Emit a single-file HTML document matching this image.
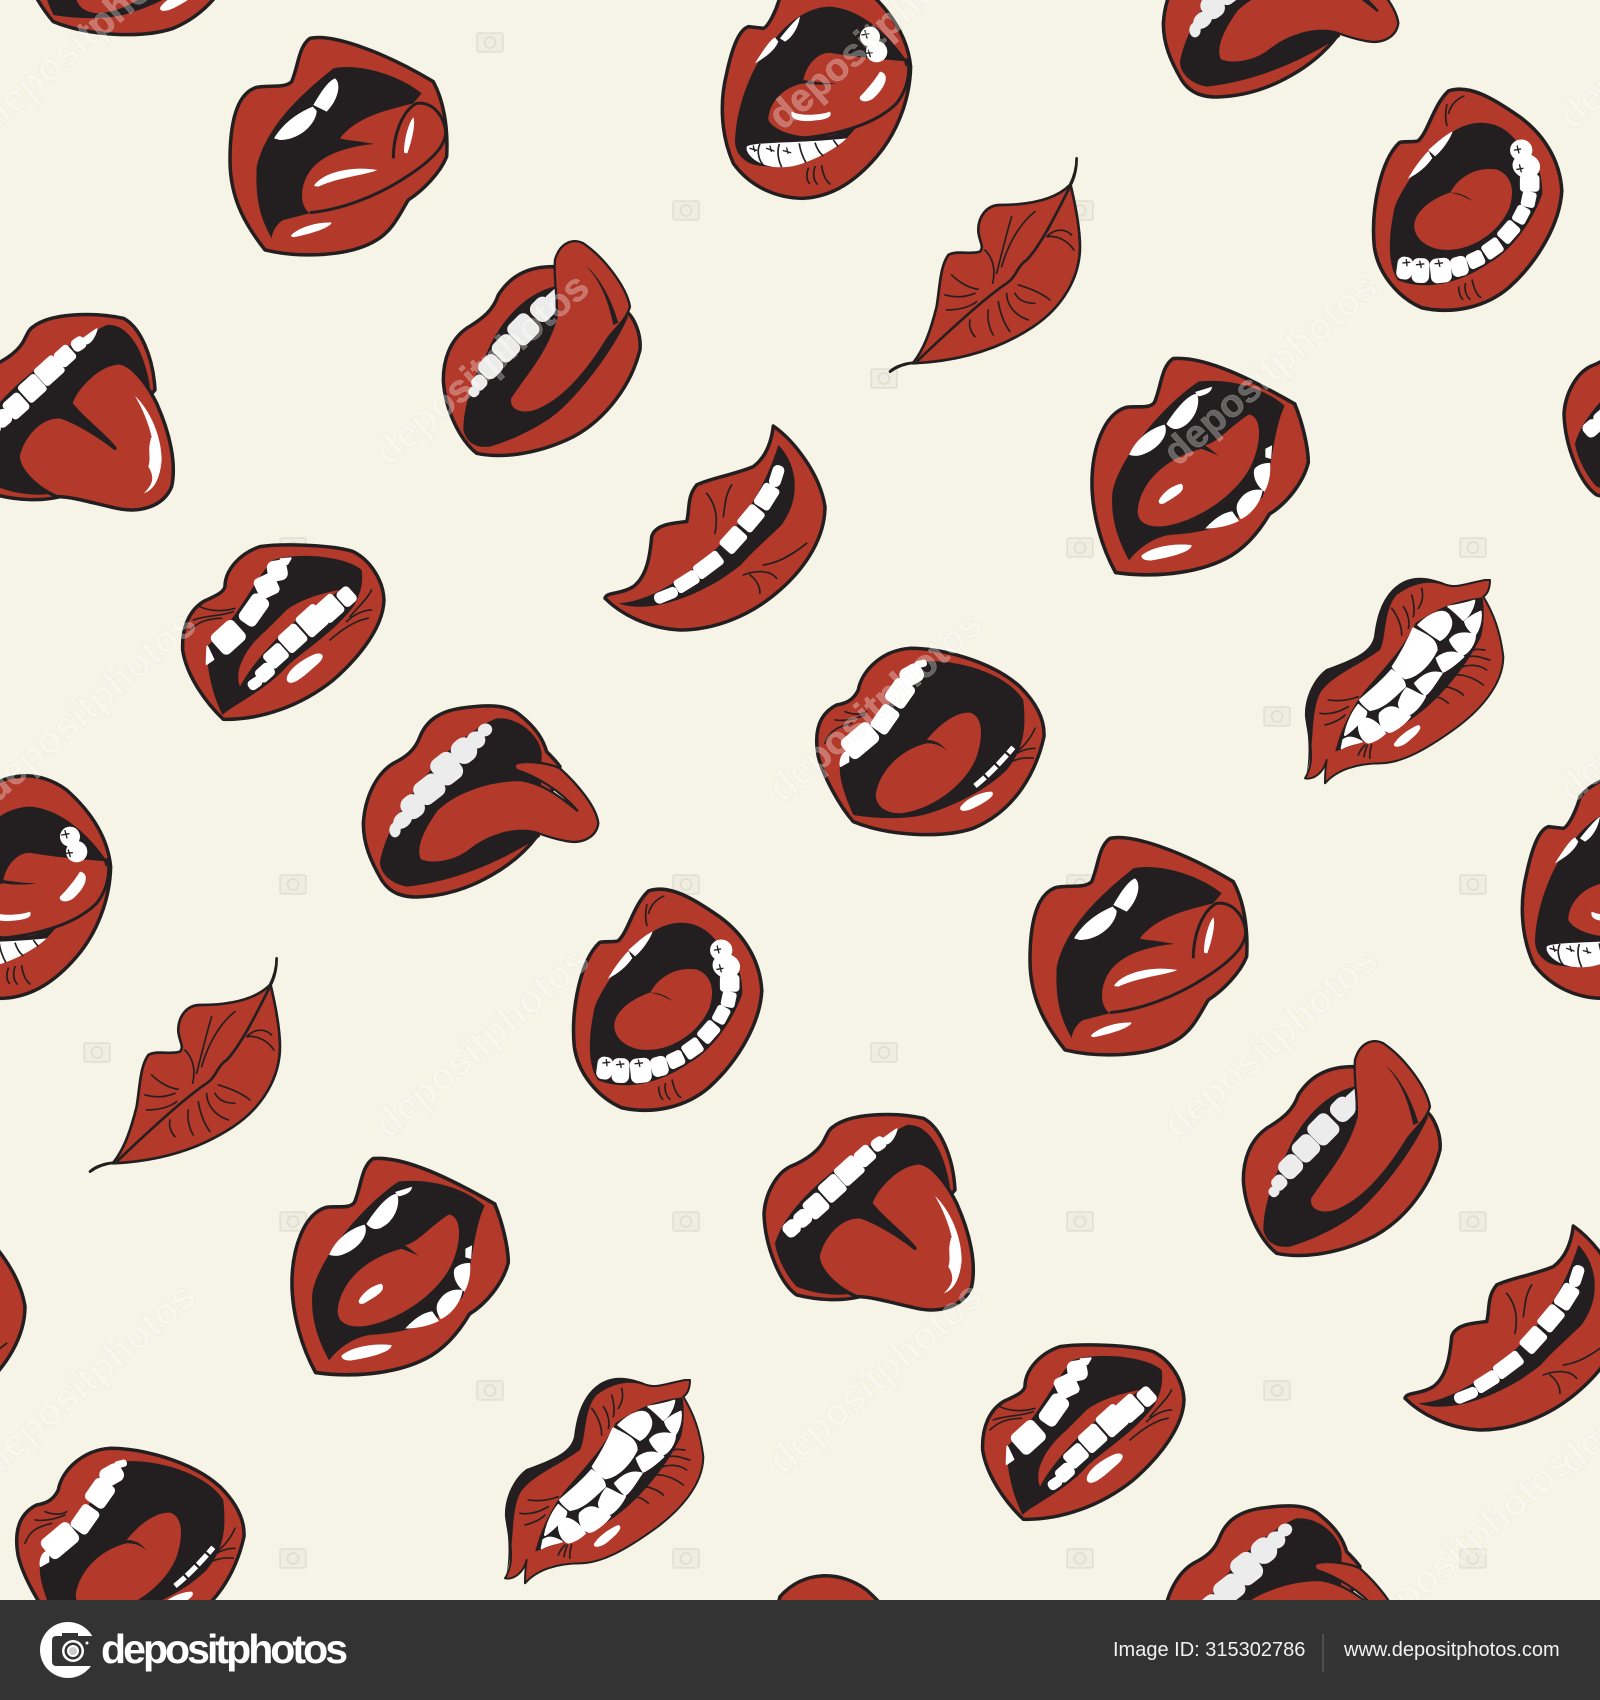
<!DOCTYPE html>
<html lang="en"><head><meta charset="utf-8"><title>Lips pattern</title>
<style>
html,body{margin:0;padding:0;background:#f6f4e6;width:1600px;height:1700px;overflow:hidden}
svg{display:block;overflow:hidden}
.o{fill:#b3392b;stroke:#231f20;stroke-width:10.500;stroke-linejoin:round}
.k{fill:#231f20}
.r{fill:#b3392b}
.s{fill:#b3392b;stroke:#231f20;stroke-width:7;stroke-linejoin:round}
.w{fill:#fff}
.e{fill:#fff;stroke:#fff;stroke-width:6;stroke-linejoin:round}
.g{fill:#ececec;stroke:#ececec;stroke-width:4}
.l{fill:none;stroke:#231f20;stroke-width:5;stroke-linecap:round}
.t{fill:none;stroke:#fff;stroke-linecap:butt}
.wm{font-family:"Liberation Sans",sans-serif;font-size:39px;font-weight:bold;fill:#fff;fill-opacity:.3;stroke:#d8d6c8;stroke-opacity:.3;stroke-width:.7}
</style></head><body>
<svg xmlns="http://www.w3.org/2000/svg" width="1600" height="1700" viewBox="0 0 1600 1700">
<defs>
<g id="c"><rect x="-13" y="-9" width="26" height="19" rx="2" fill="#8b897f" fill-opacity=".07"/><circle cx="0" cy="0.500" r="5.500"/></g>
<pattern id="cam" x="0" y="0" width="787" height="674" patternUnits="userSpaceOnUse">
<g fill="none" stroke="#8b897f" stroke-opacity=".17" stroke-width="1.5">
<use href="#c" x="490" y="42"/><use href="#c" x="293" y="210"/><use href="#c" x="686" y="210"/><use href="#c" x="97" y="378"/><use href="#c" x="293" y="547"/><use href="#c" x="686" y="547"/>
</g>
</pattern>
<g id="tile">
<!-- mouth 1 -->
<g transform="translate(200 0) scale(.3333)">
<path class="o" d="M330,115C400,100 560,160 700,245C730,300 745,380 740,470C720,520 670,570 625,600C600,640 580,690 530,720C450,770 300,775 195,750C140,680 90,600 90,480C90,370 110,280 170,262C215,255 255,265 275,245C295,200 295,140 330,115Z"/>
<path class="k" d="M400,205C470,190 590,220 665,280L640,310C560,330 470,350 420,415L525,432C430,440 340,480 310,560L330,640L250,660C230,670 215,700 215,715C185,660 165,610 170,500C200,370 320,270 400,205Z"/>
<path class="r" d="M420,415C470,350 570,330 650,310C700,305 735,350 735,400C735,470 640,560 480,610C420,630 360,640 330,640C300,620 300,570 320,530C350,470 430,440 525,432C490,420 450,425 420,415Z"/>
<path fill="none" stroke="#231f20" stroke-width="9" d="M330,638C420,630 530,590 620,530C690,485 735,440 737,400C735,350 700,305 650,310C610,330 580,400 580,475"/>
<path class="w" d="M222,415C250,370 290,340 338,320L350,332C350,370 300,420 240,420ZM340,315C355,290 380,245 405,235C425,250 415,300 380,335Z"/>
<path class="w" d="M342,558C360,525 440,495 532,510C500,525 420,530 355,560ZM612,458C612,420 625,370 640,352C648,370 635,425 622,460ZM272,708C290,685 350,665 395,668C390,685 320,705 280,712Z"/>
</g>
<!-- mouth 2 -->
<g transform="translate(200 0) scale(.3333)">
<path class="o" d="M1060,800C980,800 930,830 895,885C880,930 850,955 800,985C750,1020 730,1080 730,1140C735,1230 780,1320 830,1360C900,1375 1000,1365 1100,1320C1200,1275 1290,1170 1320,1050C1325,1000 1300,950 1280,935Z"/>
<path class="k" d="M1062,860C980,880 900,960 860,1060C820,1130 790,1220 790,1290C800,1330 830,1345 870,1340C940,1320 1020,1280 1070,1240C1150,1170 1240,1050 1285,950L1100,850Z"/>
<g class="g">
<rect x="-32" y="-32" width="64" height="64" rx="22" transform="translate(1028 928) rotate(-45)"/>
<rect x="-38" y="-38" width="76" height="76" rx="18" transform="translate(970 988) rotate(-45)"/>
<rect x="-34" y="-34" width="68" height="68" rx="18" transform="translate(918 1045) rotate(-45)"/>
<rect x="-32" y="-30" width="64" height="60" rx="20" transform="translate(872 1100) rotate(-45)"/>
<rect x="-20" y="-20" width="40" height="40" rx="14" transform="translate(838 1148) rotate(-45)"/>
<rect x="-14" y="-14" width="28" height="28" rx="12" transform="translate(822 1175) rotate(-45)"/>
<path d="M1040,890L1065,868L1065,930L1045,930Z"/>
</g>
<path class="s" d="M1065,780C1080,725 1120,715 1150,730C1210,770 1280,860 1290,920C1280,960 1240,990 1220,1020C1160,1120 1080,1210 1000,1235C960,1245 925,1230 930,1195C970,1130 1040,1060 1070,950C1075,900 1060,840 1065,780Z"/>
<path class="k" d="M1155,795C1200,840 1225,900 1240,975L1255,968C1235,900 1200,830 1155,795Z"/>
</g>
<!-- mouth 3 -->
<g transform="translate(700 0) scale(.3333)">
<path class="o" d="M240,-10C230,30 205,80 190,85L145,80C115,90 95,150 80,220C60,300 60,400 100,490C150,560 230,595 310,595C400,590 470,540 530,470C590,400 630,300 632,200C625,130 590,50 500,-30C420,-90 310,-90 240,-10Z"/>
<path class="k" d="M230,110C280,50 340,20 390,20C470,25 560,90 625,190L560,280L440,415C350,490 220,515 150,490C110,470 105,440 105,420C110,300 170,170 230,110Z"/>
<path class="r" d="M310,240C320,190 360,150 400,160C460,170 540,180 610,175L620,210C600,290 520,370 400,405C330,420 230,405 205,360C205,310 250,260 310,250C340,255 380,255 410,250C380,250 340,245 310,240Z"/>
<path fill="none" stroke="#231f20" stroke-width="9" d="M200,415C300,425 500,400 590,310C620,270 630,230 625,180L530,172"/>
<path class="w" d="M140,440C155,425 300,430 440,415C410,445 330,490 270,500C200,510 150,480 140,450Z"/>
<path fill="none" stroke="#231f20" stroke-width="5" d="M180,432C170,450 175,480 190,495M238,432C230,455 235,480 245,502M298,430C300,450 310,475 318,488M345,428C350,445 360,460 370,468M400,420L415,440"/>
<path class="l" style="stroke-width:4" d="M150,445l20,6M160,438l4,16M200,445l22,8M210,438l4,16M250,452l22,6M260,444l4,16"/>
<path class="w" d="M165,190C190,150 210,120 225,112L235,125C225,150 200,170 165,190ZM240,115C260,90 285,60 300,50C295,80 280,110 255,125Z"/>
<circle class="w" cx="510" cy="110" r="30"/><circle class="w" cx="530" cy="155" r="32"/>
<path class="l" style="stroke-width:4" d="M485,105l22,-4M495,92l6,22M495,160l22,-2M505,150l6,20"/>
<path class="w" d="M275,335C305,350 365,345 390,335C400,355 370,360 330,363C290,365 270,355 275,335ZM480,290C500,270 525,240 540,215C570,220 560,260 520,295C500,310 475,305 480,290Z"/>
<path class="l" d="M325,505C318,525 320,540 328,550M345,500C338,520 340,540 352,552M365,497C368,520 375,540 390,552"/>
</g>
<!-- mouth 4 kiss -->
<g transform="translate(700 0) scale(.3333)">
<path class="o" style="stroke-width:8" d="M1130,475C1130,510 1120,535 1110,555C1080,585 1020,615 900,615C860,615 835,650 835,690C835,720 855,740 840,755C810,765 770,750 745,765C720,800 720,860 710,920C690,1000 670,1050 640,1088C610,1092 590,1100 570,1115C590,1095 630,1088 640,1090C750,1085 880,1060 1000,980C1090,920 1140,830 1140,740C1140,680 1125,610 1112,555C1125,530 1130,500 1130,475Z"/>
<path fill="none" stroke="#231f20" stroke-width="8" d="M1110,560C1070,640 1020,740 980,780C950,800 950,830 920,850C860,890 760,980 650,1085"/>
<path class="l" d="M935,650C920,700 900,780 890,820M1005,635C960,670 925,730 905,800M855,750C885,780 885,820 878,850M755,825C780,850 810,865 835,868M735,885C770,895 800,890 825,880M740,930C780,930 810,920 830,905M1040,710C1070,680 1100,690 1115,705M1040,710C1075,705 1105,725 1122,750M955,855C990,865 1025,880 1050,900M945,880C955,900 975,910 1005,910M920,880C920,910 940,945 985,960M895,905C900,940 915,975 930,995M865,930C860,960 870,990 880,1005M810,960C805,980 815,1000 825,1010"/>
</g>
<!-- mouth 5 -->
<g transform="translate(1070 60) scale(.338 .344)">
<path class="o" d="M1120,90C1180,70 1250,110 1330,165C1400,215 1450,290 1455,380C1450,470 1390,580 1300,660C1230,720 1130,740 1040,720C970,690 910,620 900,540C890,430 920,290 975,240C990,235 1015,240 1030,235C1060,210 1075,130 1120,90Z"/>
<path class="k" d="M1130,210C1190,170 1270,170 1320,235C1370,270 1400,320 1397,390C1370,470 1300,560 1240,590C1130,665 1030,665 970,640C935,590 945,500 960,430C975,380 1060,260 1130,210Z"/>
<path class="r" d="M1125,385C1150,340 1200,310 1260,318C1300,330 1320,370 1300,430C1270,500 1190,555 1110,552C1050,550 1010,510 1020,470C1030,430 1080,400 1125,385C1150,390 1175,400 1195,412C1175,395 1150,385 1125,385Z"/>
<g class="e">
<rect x="-20" y="-30" width="40" height="60" rx="16" transform="translate(990 605) rotate(8)"/>
<rect x="-23" y="-33" width="46" height="66" rx="16" transform="translate(1037 612) rotate(2)"/>
<rect x="-28" y="-33" width="56" height="66" rx="16" transform="translate(1097 612) rotate(-6)"/>
<rect x="-22" y="-26" width="44" height="52" rx="14" transform="translate(1152 600) rotate(-15)"/>
<rect x="-22" y="-20" width="44" height="40" rx="8" transform="translate(1200 580) rotate(-25)"/>
<rect x="-25" y="-21" width="50" height="42" rx="6" transform="translate(1250 548) rotate(-35)"/>
<rect x="-27" y="-21" width="54" height="42" rx="6" transform="translate(1298 500) rotate(-48)"/>
<rect x="-22" y="-18" width="44" height="36" rx="6" transform="translate(1335 450) rotate(-62)"/>
<rect x="-20" y="-18" width="40" height="36" rx="6" transform="translate(1357 405) rotate(-78)"/>
<rect x="-22" y="-26" width="44" height="52" rx="8" transform="translate(1360 358) rotate(-90)"/>
<ellipse cx="1350" cy="308" rx="38" ry="32" transform="rotate(15 1350 308)"/>
<ellipse cx="1335" cy="262" rx="30" ry="28"/>
</g>
<path class="w" d="M1000,345C1020,310 1045,280 1060,265L1072,285C1055,310 1030,330 1000,345ZM1060,262C1085,240 1115,215 1132,208C1125,230 1100,265 1080,280Z"/>
<path class="l" style="stroke-width:4" d="M1315,262l18,-3M1323,250l5,20M1322,318l18,-3M1330,305l5,20M985,590l20,-2M995,580l2,18M1025,595l22,-2M1035,585l4,18M1080,592l22,-2M1090,582l4,18"/>
<path class="l" d="M1150,660C1150,675 1155,690 1162,695M1170,650C1165,670 1175,690 1183,695M1190,640C1195,665 1205,685 1215,690M1115,130C1110,150 1110,170 1115,190M1165,105C1140,115 1125,135 1120,155"/>
</g>
<!-- mouth 6 -->
<g transform="translate(1070 60) scale(.338 .344)">
<path class="o" d="M305,868C400,860 540,930 665,1000C690,1060 705,1130 705,1170C690,1230 640,1290 590,1320C560,1370 520,1420 460,1450C370,1495 240,1505 135,1490C95,1420 65,1320 65,1230C65,1130 100,1030 165,1010C200,1005 235,1015 250,995C270,950 270,890 305,868Z"/>
<path class="k" d="M380,935C470,925 570,950 635,1005C600,1080 600,1180 570,1270C500,1350 400,1375 300,1380C250,1385 200,1420 175,1455C145,1400 120,1340 125,1260C140,1160 280,1000 380,935Z"/>
<path class="r" d="M200,1310C205,1240 270,1160 390,1130L440,1150L400,1120C440,1110 480,1060 530,1030C570,1040 565,1110 540,1170C500,1260 380,1340 280,1355C230,1360 200,1345 200,1310Z"/>
<path class="w" d="M175,1148C195,1100 240,1070 280,1060C295,1090 260,1130 220,1145C205,1152 190,1152 175,1148ZM285,1058C310,1020 345,975 375,970C390,1000 365,1060 320,1072C305,1075 295,1068 285,1058ZM370,965L420,950C420,965 400,975 380,978Z"/>
<path class="w" d="M545,1190C555,1175 580,1170 592,1172C595,1210 585,1240 575,1255C555,1240 540,1215 545,1190ZM495,1290C510,1260 535,1245 570,1250C565,1290 530,1325 505,1335C495,1320 490,1305 495,1290ZM400,1362C420,1340 450,1315 480,1312L500,1340C470,1355 430,1362 400,1362ZM578,1130L598,1120L595,1160L578,1155Z"/>
<path class="w" d="M263,1280C280,1250 310,1235 330,1232C345,1250 320,1265 280,1288C270,1293 260,1290 263,1280ZM212,1440C250,1410 320,1405 360,1410C360,1430 300,1445 240,1455C220,1455 210,1450 212,1440Z"/>
</g>
<!-- mouth 7 -->
<g transform="translate(0 300) scale(.3333)">
<path class="o" d="M100,80C150,40 280,35 370,55C420,80 460,170 465,270L180,590C120,605 50,600 -10,585C-60,550 -105,440 -108,342C-105,280 -70,220 -30,200C20,180 60,150 75,115C85,95 90,85 100,80Z"/>
<path class="k" d="M320,75C380,70 430,140 450,260L160,580C100,590 40,580 -10,560C-40,530 -70,470 -75,430C-40,310 130,170 320,75Z"/>
<g class="e">
<rect x="-35" y="-30" width="70" height="60" rx="7" transform="translate(148 212) rotate(-42)"/>
<rect x="-31" y="-30" width="62" height="60" rx="7" transform="translate(97 265) rotate(-42)"/>
<rect x="-29" y="-29" width="58" height="58" rx="9" transform="translate(48 318) rotate(-42)"/>
<rect x="-22" y="-22" width="44" height="44" rx="14" transform="translate(8 355) rotate(-42)"/>
<rect x="-22" y="-21" width="44" height="42" rx="14" transform="translate(-25 385) rotate(-42)"/>
<rect x="-24" y="-24" width="48" height="48" rx="8" transform="translate(195 168) rotate(-42)"/>
<rect x="-19" y="-17" width="38" height="34" rx="12" transform="translate(236 132) rotate(-35)"/>
<path d="M252,115C265,105 280,95 290,88C285,105 275,125 262,130Z"/>
</g>
<path class="o" d="M345,190C380,180 430,230 470,310C510,400 530,490 515,560C490,620 420,640 350,625C280,610 220,590 170,590C100,560 50,500 55,465C65,420 110,350 180,350C230,365 300,410 345,445C310,400 250,360 212,310C230,260 290,200 345,190Z"/>
<path class="w" d="M405,288C450,330 485,410 485,480C480,540 460,570 432,580C450,560 470,540 445,500C455,470 440,450 455,410C445,370 430,330 405,288Z"/>
</g>
<!-- mouth 8 smile -->
<g transform="translate(590 410) scale(.3333)">
<path class="o" d="M550,48C610,90 690,190 705,290C705,380 650,470 570,540C480,620 370,660 270,660C170,655 90,610 45,565C50,545 90,555 130,530C170,500 180,440 185,380C195,345 240,340 290,335C300,300 290,260 320,225C360,205 430,195 490,170C530,140 545,90 550,48Z"/>
<path class="k" d="M565,105C620,160 630,250 590,320C560,380 480,450 390,510C290,570 170,610 85,580C170,575 260,520 340,450C430,380 520,250 565,105Z"/>
<path class="r" d="M585,335C560,380 490,440 445,475C480,430 530,390 585,335Z"/>
<g class="e">
<rect x="-30" y="-15" width="60" height="30" rx="13" transform="translate(560 198) rotate(-72)"/>
<rect x="-34" y="-24" width="68" height="48" rx="8" transform="translate(530 260) rotate(-58)"/>
<rect x="-34" y="-25" width="68" height="50" rx="7" transform="translate(483 325) rotate(-50)"/>
<rect x="-34" y="-25" width="68" height="50" rx="7" transform="translate(430 390) rotate(-48)"/>
<rect x="-42" y="-21" width="84" height="42" rx="7" transform="translate(355 465) rotate(-37)"/>
<rect x="-34" y="-19" width="68" height="38" rx="7" transform="translate(290 515) rotate(-32)"/>
<rect x="-34" y="-14" width="68" height="28" rx="12" transform="translate(228 556) rotate(-22)"/>
</g>
<path class="l" d="M350,250C375,280 385,320 375,370M425,225C405,255 405,290 400,320M650,400C600,440 560,460 520,465M460,495C500,480 540,480 560,505M480,495C500,510 510,530 510,550"/>
</g>
<!-- mouth 9 grimace -->
<g transform="translate(0 300) scale(.3333)">
<path class="o" d="M780,740C850,730 1000,735 1060,755C1110,780 1150,840 1152,900C1150,980 1080,1070 1000,1140C900,1220 780,1260 670,1258C620,1210 560,1130 548,1050C545,980 570,930 610,905C640,890 670,880 675,860C675,810 720,760 780,740Z"/>
<path class="k" d="M820,780C760,840 720,950 620,1040C620,1090 630,1170 668,1245C690,1220 800,1170 860,1100C900,1060 1000,1000 1060,920C1085,880 1090,840 1085,810C1040,770 900,755 820,780Z"/>
<path class="r" d="M720,1160C700,1110 740,1040 800,990L860,930C900,900 960,880 1020,870L890,960C830,1010 750,1100 720,1160Z"/>
<g class="e">
<rect x="-42" y="-36" width="84" height="72" rx="14" transform="translate(685 1012) rotate(-42)"/>
<rect x="-45" y="-27" width="90" height="54" rx="14" transform="translate(762 930) rotate(-55)"/>
<rect x="-30" y="-30" width="60" height="60" rx="12" transform="translate(800 858) rotate(-25)"/>
<rect x="-27" y="-28" width="54" height="56" rx="18" transform="translate(832 812) rotate(-10)"/>
<path d="M622,1040L640,1078L620,1092ZM842,778L872,775L862,792Z"/>
<rect x="-20" y="-25" width="40" height="50" rx="10" transform="translate(1040 890) rotate(-42)"/>
<rect x="-30" y="-32" width="60" height="64" rx="8" transform="translate(990 925) rotate(-42)"/>
<rect x="-35" y="-36" width="70" height="72" rx="8" transform="translate(937 962) rotate(-42)"/>
<rect x="-32" y="-31" width="64" height="62" rx="8" transform="translate(878 1015) rotate(-42)"/>
<rect x="-30" y="-25" width="60" height="50" rx="8" transform="translate(828 1068) rotate(-42)"/>
<rect x="-24" y="-20" width="48" height="40" rx="10" transform="translate(795 1118) rotate(-42)"/>
<rect x="-19" y="-13" width="38" height="26" rx="10" transform="translate(765 1150) rotate(-35)"/>
</g>
<path class="w" d="M863,1145C850,1125 890,1085 945,1062C975,1055 975,1075 950,1095C915,1125 880,1160 863,1145Z"/>
<path class="l" d="M600,920C630,935 670,935 705,925M580,960C620,945 660,950 700,935M570,990C600,960 640,955 665,955M1115,870C1100,900 1075,920 1050,950M1115,930C1090,930 1060,945 1040,965M1105,955C1070,960 1030,985 990,1020"/>
</g>
<!-- mouth 10 -->
<g transform="translate(1290 560) scale(.3333)">
<path class="o" style="stroke-width:6" d="M585,60C530,70 500,85 470,75C420,55 360,40 310,90C270,130 260,190 255,230C245,280 190,300 110,330C70,360 45,420 48,470C55,530 80,600 45,655C70,660 100,640 110,600C105,630 105,650 105,670C140,630 200,610 270,610C340,610 420,560 490,510C560,460 640,380 640,290C630,210 610,160 580,110C595,100 600,80 600,60Z"/>
<path fill="#231f20" d="M310,90C270,130 260,190 255,230C245,280 190,300 110,330C70,360 45,420 48,470C55,530 60,580 50,640C75,560 60,460 90,400C120,350 200,320 270,270C290,230 280,150 320,105C380,60 440,60 480,85C430,55 360,40 310,90Z"/>
<path class="k" stroke="#231f20" stroke-width="6" d="M575,115C480,125 430,160 380,190C340,270 290,320 230,390C190,440 155,510 140,570C190,550 300,520 370,470C440,420 520,330 570,230C580,190 580,150 575,115Z"/>
<path class="e" d="M475,140C505,135 535,128 553,122C550,145 535,170 520,180C505,165 490,150 475,140ZM385,195C420,160 465,140 478,170C495,195 470,230 450,240C425,225 405,210 385,195ZM525,185C540,170 560,160 572,155C575,185 565,210 555,225C545,215 530,205 525,185ZM480,240C495,220 520,215 555,225C555,250 535,280 515,285C500,270 485,255 480,240ZM370,205C405,225 440,235 440,270C420,310 385,350 345,355C325,340 315,330 308,320C335,280 355,240 370,205ZM440,295C470,270 500,275 520,290C505,305 480,325 460,335C450,320 445,310 440,295ZM305,330C325,345 345,360 345,380C320,400 285,445 240,450C225,440 215,430 210,420C245,390 280,360 305,330ZM375,370C395,350 420,330 455,340C435,370 420,395 405,405C395,395 385,385 375,370ZM350,385C375,395 395,410 405,410C390,440 365,465 350,465C335,450 320,440 330,420C335,405 340,395 350,385ZM205,435C225,455 235,450 225,470C205,490 190,510 165,525C170,495 185,460 205,435ZM270,460C300,430 320,440 360,470C340,495 305,520 295,515C275,510 265,480 270,460ZM210,480C235,465 265,490 285,520C270,535 250,545 235,548C215,540 200,510 210,480ZM160,540C175,530 190,530 215,545C195,550 170,555 155,565Z"/>
<path class="w" d="M313,550C330,525 360,505 385,495C400,500 385,520 360,540C335,565 305,565 313,550Z"/>
<path class="l" d="M305,145C325,170 335,200 335,225M340,140C355,160 360,190 355,205M365,105C372,130 375,150 370,170M395,85C402,110 395,130 385,145M115,420C150,425 180,420 205,410M90,460C120,465 150,455 175,440M105,495C125,490 150,480 165,465M440,375C480,380 505,390 520,405M435,410C450,412 465,420 475,430M480,345C520,340 555,355 580,375M505,325C540,310 570,315 590,330M535,290C560,285 580,295 600,300M550,270C565,265 575,270 585,270M205,585C210,570 220,560 225,555M222,590C225,575 228,565 232,555M240,595C238,580 242,565 245,555"/>
</g>
<!-- mouth 11 -->
<g transform="translate(590 410) scale(.3333)">
<path class="o" d="M960,715C1050,715 1200,750 1290,830C1340,880 1365,930 1362,980C1340,1080 1280,1200 1150,1255C1060,1285 900,1280 790,1235C750,1190 700,1100 685,1040C670,960 690,910 740,885C770,880 790,870 805,840C815,780 880,720 960,715Z"/>
<path class="k" d="M990,755C1100,745 1250,790 1300,870C1310,960 1300,1020 1250,1080C1190,1140 1090,1190 1000,1215C930,1230 850,1225 790,1215C770,1170 745,1110 750,1060C790,1010 850,950 900,880C930,820 960,770 990,755Z"/>
<g class="e">
<rect x="-50" y="-34" width="100" height="68" rx="14" transform="translate(810 992) rotate(-40)"/>
<rect x="-38" y="-27" width="76" height="54" rx="10" transform="translate(885 928) rotate(-55)"/>
<rect x="-36" y="-32" width="72" height="64" rx="12" transform="translate(930 850) rotate(-55)"/>
<rect x="-32" y="-26" width="64" height="52" rx="18" transform="translate(965 795) rotate(-30)"/>
<rect x="-16" y="-8" width="32" height="16" rx="6" transform="translate(992 762) rotate(-15)"/>
<path d="M752,1068C750,1045 760,1025 775,1025L775,1055Z"/>
</g>
<path class="r" d="M1010,990C1050,940 1100,905 1140,908C1180,920 1180,980 1160,1040C1130,1120 1030,1200 930,1210C870,1210 850,1170 860,1140C875,1080 930,1020 1010,1000C1040,1000 1060,1010 1070,1025C1060,1005 1040,990 1010,990Z"/>
<path class="t" stroke-width="16" stroke-dasharray="40 7" d="M1155,1128C1190,1100 1230,1060 1270,1012"/>
<path class="w" d="M1112,1190C1130,1165 1175,1145 1205,1145C1220,1155 1190,1175 1150,1195C1125,1207 1105,1205 1112,1190Z"/>
<path class="l" d="M735,930C770,935 800,925 825,915M765,905C790,915 815,915 830,905M705,1000C720,960 745,950 785,940M1335,955C1320,990 1295,1015 1275,1030M1335,1015C1310,1015 1285,1025 1265,1040M1330,1045C1300,1040 1270,1050 1245,1065"/>
</g>
<!-- mouth 12 -->
<g transform="translate(340 680) scale(.3333)">
<path class="o" d="M240,170C260,120 300,95 360,85C430,75 500,70 540,105C590,145 610,180 620,215C640,235 650,245 660,260L590,470C530,550 400,640 250,650C190,655 150,640 125,600C90,540 70,490 70,430C75,350 110,280 160,250C200,230 225,210 240,170Z"/>
<path class="k" d="M470,115C540,110 600,170 605,220L600,470C520,520 380,600 200,620C150,610 120,580 120,545C140,430 250,280 350,190C390,160 440,125 470,115Z"/>
<g class="g">
<rect x="-38" y="-44" width="76" height="88" rx="24" transform="translate(320 266) rotate(-38)"/>
<rect x="-42" y="-36" width="84" height="72" rx="22" transform="translate(268 328) rotate(-38)"/>
<rect x="-35" y="-36" width="70" height="72" rx="30" transform="translate(372 212) rotate(-38)"/>
<rect x="-31" y="-34" width="62" height="68" rx="26" transform="translate(218 380) rotate(-38)"/>
<ellipse cx="188" cy="420" rx="30" ry="21" transform="rotate(-40 188 420)"/>
<ellipse cx="165" cy="450" rx="15" ry="20"/>
<ellipse cx="408" cy="180" rx="26" ry="24"/>
<ellipse cx="435" cy="150" rx="20" ry="17" transform="rotate(-20 435 150)"/>
</g>
<path class="s" d="M530,250C560,240 630,250 660,265C710,310 770,380 775,430C770,470 730,490 690,485C650,480 610,465 590,458C520,440 440,470 390,510C340,550 270,555 240,540C225,510 240,460 290,390C340,340 440,300 540,300C610,310 660,350 712,392C660,330 590,290 530,270C522,260 522,255 530,250Z"/>
</g>
</g>
</defs>
<rect width="1600" height="1700" fill="#f6f4e6"/>
<rect width="1600" height="1600" fill="url(#cam)"/>
<use href="#tile" transform="translate(0 0)"/>
<use href="#tile" transform="translate(800 800)"/>
<use href="#tile" transform="translate(-800 800)"/>
<use href="#tile" transform="translate(800 -800)"/>
<use href="#tile" transform="translate(-800 -800)"/>
<use href="#tile" transform="translate(1600 0)"/>
<use href="#tile" transform="translate(-1600 0)"/>
<use href="#tile" transform="translate(0 1600)"/>
<use href="#tile" transform="translate(1600 1600)"/>
<use href="#tile" transform="translate(-1600 1600)"/>
<g class="wm" text-anchor="middle">
<text transform="translate(97 43) rotate(-41)">depositphotos</text>
<text transform="translate(884 43) rotate(-41)">depositphotos</text>
<text transform="translate(490 379) rotate(-41)">depositphotos</text>
<text transform="translate(1279 379) rotate(-41)">depositphotos</text>
<text transform="translate(97 716) rotate(-41)">depositphotos</text>
<text transform="translate(884 716) rotate(-41)">depositphotos</text>
<text transform="translate(490 1052) rotate(-41)">depositphotos</text>
<text transform="translate(1279 1052) rotate(-41)">depositphotos</text>
<text transform="translate(97 1388) rotate(-41)">depositphotos</text>
<text transform="translate(884 1388) rotate(-41)">depositphotos</text>
<text transform="translate(1474 1555) rotate(-41)">depositphotos</text>
<text transform="translate(1674 43) rotate(-41)">depositphotos</text>
<text transform="translate(1674 716) rotate(-41)">depositphotos</text>
<text transform="translate(1674 1388) rotate(-41)">depositphotos</text>
</g>
<rect x="0" y="1600" width="1600" height="100" fill="#333"/>
<circle cx="68" cy="1650" r="28" fill="#fff"/>
<rect x="52" y="1636" width="44" height="30" rx="4" fill="#333"/>
<rect x="62" y="1633" width="16" height="5" fill="#333"/>
<circle cx="73" cy="1651" r="11" fill="#fff"/><circle cx="73" cy="1651" r="8.500" fill="#333"/><circle cx="73" cy="1651" r="6" fill="#fff"/><circle cx="73" cy="1651" r="4" fill="#ccc"/>
<circle cx="87" cy="1643" r="1.500" fill="#fff"/>
<text x="101" y="1663" font-family="Liberation Sans, sans-serif" font-weight="bold" font-size="41" fill="#fff" textLength="247" lengthAdjust="spacing">depositphotos</text>
<text x="1113" y="1656" font-family="Liberation Sans, sans-serif" font-size="20" fill="#f2f2f2">Image ID: 315302786</text>
<rect x="1322.500" y="1634" width="1" height="38" fill="#6a6a6a"/>
<text x="1344" y="1656" font-family="Liberation Sans, sans-serif" font-size="20" fill="#f2f2f2">www.depositphotos.com</text>
</svg>
</body></html>
